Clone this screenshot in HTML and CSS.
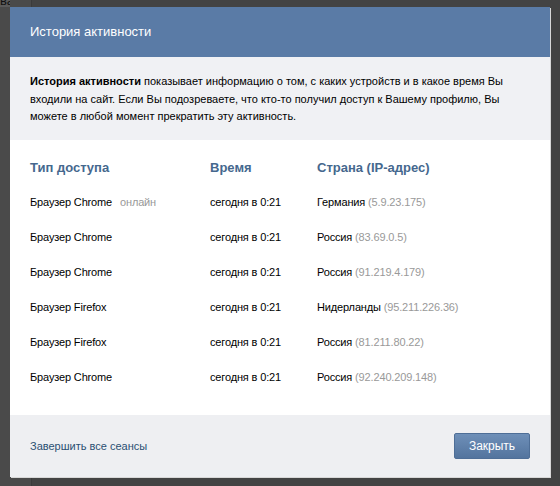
FILE: index.html
```html
<!DOCTYPE html>
<html lang="ru">
<head>
<meta charset="utf-8">
<title>История активности</title>
<link rel="stylesheet" href="styles.css">
</head>
<body>
<div class="backdrop">
  <div class="backdrop-strip"></div>
  <div class="backdrop-cell">ва</div>
</div>
<div class="dialog">
  <div class="dialog-header">История активности</div>
  <div class="dialog-intro"><b>История активности</b> показывает информацию о том, с каких устройств и в какое время Вы входили на сайт. Если Вы подозреваете, что кто-то получил доступ к Вашему профилю, Вы можете в любой момент прекратить эту активность.</div>
  <div class="dialog-body">
    <div class="sessions">
      <div class="th">Тип доступа</div><div class="th">Время</div><div class="th">Страна (IP-адрес)</div>
      <div class="td">Браузер Chrome <span class="online">онлайн</span></div><div class="td">сегодня в 0:21</div><div class="td">Германия <span class="ip">(5.9.23.175)</span></div>
      <div class="td">Браузер Chrome</div><div class="td">сегодня в 0:21</div><div class="td">Россия <span class="ip">(83.69.0.5)</span></div>
      <div class="td">Браузер Chrome</div><div class="td">сегодня в 0:21</div><div class="td">Россия <span class="ip">(91.219.4.179)</span></div>
      <div class="td">Браузер Firefox</div><div class="td">сегодня в 0:21</div><div class="td">Нидерланды <span class="ip">(95.211.226.36)</span></div>
      <div class="td">Браузер Firefox</div><div class="td">сегодня в 0:21</div><div class="td">Россия <span class="ip">(81.211.80.22)</span></div>
      <div class="td">Браузер Chrome</div><div class="td">сегодня в 0:21</div><div class="td">Россия <span class="ip">(92.240.209.148)</span></div>
    </div>
  </div>
  <div class="dialog-footer">
    <a class="footer-link" href="#">Завершить все сеансы</a>
    <button class="btn" type="button">Закрыть</button>
  </div>
</div>
</body>
</html>
```
FILE: styles.css
```css
html, body {
  margin: 0;
  padding: 0;
}
body {
  position: relative;
  width: 560px;
  height: 486px;
  overflow: hidden;
  background: #434343;
  font-family: "Liberation Sans", Arial, sans-serif;
  font-size: 11px;
  color: #000;
}
.backdrop {
  position: absolute;
  inset: 0;
}
.backdrop-strip {
  position: absolute;
  left: 0;
  top: 0;
  bottom: 0;
  width: 31px;
  background: #4a4a4a;
  border-right: 1px solid #3b3b3b;
}
.backdrop-cell {
  position: absolute;
  left: 0;
  top: 0;
  width: 10px;
  height: 7px;
  background: #5b5b5b;
  overflow: hidden;
}
.backdrop-cell-text {
  display: block;
}
.backdrop-cell {
  color: #111;
  font-size: 13px;
  line-height: 1px;
  padding-top: 0;
}
.dialog {
  position: relative;
  margin: 7px 0 0 10px;
  width: 540px;
  background: #fff;
  box-shadow: 1px 1px 0 #d8d8d8;
}
.dialog-header {
  height: 50px;
  background: #5a7ba6;
  color: #fff;
  font-size: 13px;
  line-height: 50px;
  padding: 0 20px;
}
.dialog-intro {
  background: #f0f1f4;
  padding: 16px 20px 14px;
  line-height: 17.5px;
  height: 52.5px;
}
.dialog-body {
  padding: 10px 20px 20px;
}
.sessions {
  display: grid;
  grid-template-columns: 180px 107px 1fr;
  grid-auto-rows: 35px;
  align-items: center;
}
.td {
  letter-spacing: -0.15px;
}
.th {
  font-weight: bold;
  font-size: 13px;
  color: #45688e;
}
.online {
  color: #999;
  margin-left: 5px;
}
.ip {
  color: #999;
}
.dialog-footer {
  height: 62px;
  background: #eeeff2;
  padding: 0 20px;
  display: flex;
  align-items: center;
  justify-content: space-between;
}
.footer-link {
  color: #2b4f72;
  text-decoration: none;
  font-size: 11px;
}
.btn {
  width: 76px;
  height: 26px;
  border: 1px solid #4e6e97;
  border-radius: 2px;
  background: linear-gradient(#6e8fb8, #53749e);
  color: #fff;
  font-family: "Liberation Sans", Arial, sans-serif;
  font-size: 12px;
  padding: 0;
}
```
